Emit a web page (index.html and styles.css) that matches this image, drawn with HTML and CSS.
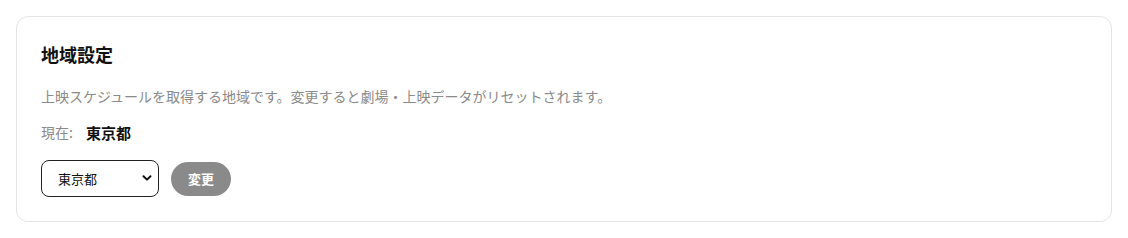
FILE: index.html
```html
<!DOCTYPE html>
<html lang="ja">
<head>
<meta charset="utf-8">
<link rel="stylesheet" href="styles.css">
</head>
<body>
<section class="card">
  <h2 class="title">地域設定</h2>
  <p class="desc">上映スケジュールを取得する地域です。変更すると劇場・上映データがリセットされます。</p>
  <div class="current"><span class="label">現在:</span><span class="value">東京都</span></div>
  <div class="controls">
    <div class="select-wrap">
      <select class="select">
        <option selected>東京都</option>
        <option>大阪府</option>
        <option>神奈川県</option>
      </select>
      <svg class="chev" width="10" height="8" viewBox="0 0 10 8"><path d="M1.5 2.2 L5 5.6 L8.5 2.2" fill="none" stroke="#111" stroke-width="2" stroke-linecap="round" stroke-linejoin="round"/></svg>
    </div>
    <button class="btn" type="button">変更</button>
  </div>
</section>
</body>
</html>
```

FILE: styles.css
```css
* { box-sizing: border-box; }
html, body { background: #ffffff; }
body {
  margin: 0;
  padding: 16px;
  font-family: "Noto Sans CJK JP", "Noto Sans", sans-serif;
  color: #111;
}
.card {
  border: 1px solid #e4e4e7;
  border-radius: 12px;
  background: #fff;
  padding: 24px 24px 24px;
  display: flex;
  flex-direction: column;
}
.title {
  margin: 0;
  font-size: 18px;
  line-height: 27px;
  font-weight: 700;
  color: #111;
}
.desc {
  margin: 18px 0 0;
  font-size: 14px;
  line-height: 21px;
  color: #8a8a8a;
}
.current {
  margin-top: 13px;
  display: flex;
  align-items: center;
  gap: 13px;
  height: 24px;
}
.label {
  font-size: 14px;
  color: #8a8a8a;
}
.value {
  font-size: 15px;
  font-weight: 700;
  color: #111;
}
.controls {
  margin-top: 16px;
  display: flex;
  align-items: center;
  gap: 12px;
}
.select-wrap {
  position: relative;
  width: 118px;
  height: 37px;
}
.select {
  appearance: none;
  -webkit-appearance: none;
  width: 100%;
  height: 100%;
  border: 1px solid #222;
  border-radius: 8px;
  background: #fff;
  padding: 0 24px 0 16px;
  font-family: inherit;
  font-size: 13px;
  color: #111;
}
.chev {
  position: absolute;
  right: 7px;
  top: 14px;
  pointer-events: none;
}
.btn {
  width: 60px;
  height: 34px;
  border: none;
  border-radius: 17px;
  background: #8a8a8a;
  color: #fff;
  font-family: inherit;
  font-size: 13px;
  font-weight: 700;
  padding: 0;
}
```
